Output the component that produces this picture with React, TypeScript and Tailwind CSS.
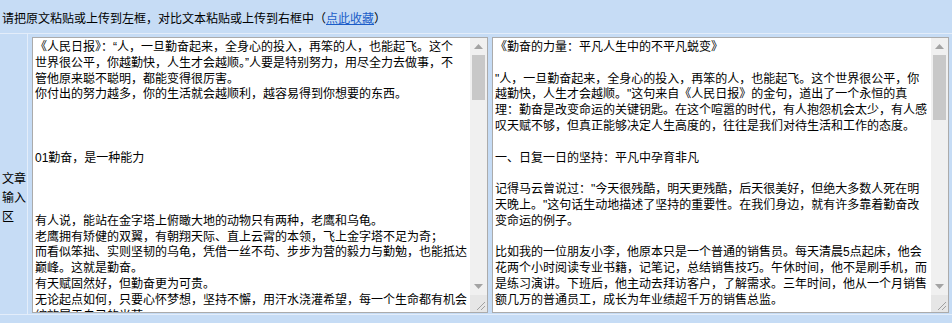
import { useState } from "react";

const LEFT_TEXT = `《人民日报》：“人，一旦勤奋起来，全身心的投入，再笨的人，也能起飞。这个
世界很公平，你越勤快，人生才会越顺。”人要是特别努力，用尽全力去做事，不
管他原来聪不聪明，都能变得很厉害。
你付出的努力越多，你的生活就会越顺利，越容易得到你想要的东西。



01勤奋，是一种能力



有人说，能站在金字塔上俯瞰大地的动物只有两种，老鹰和乌龟。
老鹰拥有矫健的双翼，有朝翔天际、直上云霄的本领，飞上金字塔不足为奇；
而看似笨拙、实则坚韧的乌龟，凭借一丝不苟、步步为营的毅力与勤勉，也能抵达
巅峰。这就是勤奋。
有天赋固然好，但勤奋更为可贵。
无论起点如何，只要心怀梦想，坚持不懈，用汗水浇灌希望，每一个生命都有机会
绽放属于自己的光芒。



02勤奋，是一种态度



所谓天才，不过是把别人喝咖啡的功夫都用在了工作上。
那些看起来毫不费力的人，背后都付出了常人难以想象的努力。
每天进步一点点，日积月累，终会迎来质的飞跃。



03勤奋，是一种习惯



习惯一旦养成，便会成为生命的一部分。
早起读书，按时锻炼，认真对待每一件小事，
这些看似平凡的坚持，终将让你成为更好的自己。



04勤奋，是一种修行



人生没有白走的路，每一步都算数。
与其羡慕别人的成功，不如从现在开始，
脚踏实地，一步一个脚印，走好属于自己的路。
愿你我都能以勤奋为桨，驶向更辽阔的远方。
`;

const RIGHT_TEXT = `《勤奋的力量：平凡人生中的不平凡蜕变》

"人，一旦勤奋起来，全身心的投入，再笨的人，也能起飞。这个世界很公平，你
越勤快，人生才会越顺。"这句来自《人民日报》的金句，道出了一个永恒的真
理：勤奋是改变命运的关键钥匙。在这个喧嚣的时代，有人抱怨机会太少，有人感
叹天赋不够，但真正能够决定人生高度的，往往是我们对待生活和工作的态度。

一、日复一日的坚持：平凡中孕育非凡

记得马云曾说过："今天很残酷，明天更残酷，后天很美好，但绝大多数人死在明
天晚上。"这句话生动地描述了坚持的重要性。在我们身边，就有许多靠着勤奋改
变命运的例子。

比如我的一位朋友小李，他原本只是一个普通的销售员。每天清晨5点起床，他会
花两个小时阅读专业书籍，记笔记，总结销售技巧。午休时间，他不是刷手机，而
是练习演讲。下班后，他主动去拜访客户，了解需求。三年时间，他从一个月销售
额几万的普通员工，成长为年业绩超千万的销售总监。

二、勤能补拙：天赋之外的另一条路

古人云："勤能补拙是良训，一分辛苦一分才。"天赋固然重要，但它只是起点，
而不是终点。那些看似天资平平的人，凭借日复一日的努力，同样可以走得很远。

三、勤奋的真谛：方向比努力更重要

勤奋不是盲目的忙碌，而是有目标、有方法的持续投入。找准方向，
再全力以赴，才能让每一分汗水都开出花来。

结语

愿我们都能成为勤奋的人，在平凡的日子里，书写不平凡的人生。
`;

function Arrow({ down }: { down?: boolean }) {
  return (
    <div className="flex h-[17px] items-center justify-center">
      <svg width="9" height="5" viewBox="0 0 9 5">
        {down ? (
          <polygon points="0,0 9,0 4.5,5" fill="#a3a3a3" />
        ) : (
          <polygon points="0,5 9,5 4.5,0" fill="#a3a3a3" />
        )}
      </svg>
    </div>
  );
}

function ScrollBar({ thumb }: { thumb: number }) {
  return (
    <div className="flex w-[17px] shrink-0 flex-col bg-[#f0f0f0]">
      <Arrow />
      <div className="flex-1 px-[2px]">
        <div className="w-full bg-[#c8c8c8]" style={{ height: thumb }} />
      </div>
      <Arrow down />
      <div className="flex h-[17px] items-end justify-end bg-[#e6e6e6] pb-[2px] pr-[2px]">
        <svg width="10" height="10" viewBox="0 0 10 10">
          <line x1="10" y1="2" x2="2" y2="10" stroke="#a0a0a0" strokeWidth="1" />
          <line x1="10" y1="6" x2="6" y2="10" stroke="#a0a0a0" strokeWidth="1" />
        </svg>
      </div>
    </div>
  );
}

function TextBox({ text, width, thumb }: { text: string; width: string; thumb: number }) {
  const [value, setValue] = useState(text);
  return (
    <div className={`flex h-[276px] border border-[#ababab] bg-white ${width}`}>
      <textarea
        value={value}
        onChange={(e) => setValue(e.target.value)}
        className="h-full min-w-0 flex-1 resize-none overflow-hidden bg-white p-[2px] text-[12px] leading-[15.8px] text-black outline-none"
        spellCheck={false}
      />
      <ScrollBar thumb={thumb} />
    </div>
  );
}

export default function App() {
  return (
    <div className="h-[323px] w-[952px] overflow-hidden bg-[#c6dcf5] text-[12px] text-black [font-family:'Liberation_Sans','Noto_Sans_CJK_SC',sans-serif]">
      <div className="h-[34px] border-b border-[#e3edfa] pl-[2px] pt-[11px] leading-[16px]">
        请把原文粘贴或上传到左框，对比文本粘贴或上传到右框中（
        <a href="#" className="text-[#1a5cc8] underline">
          点此收藏
        </a>
        ）
      </div>
      <div className="flex border-b border-[#e3edfa]">
        <div className="w-[28px] shrink-0 border-r border-[#e3edfa] pl-[2px] pt-[136px] leading-[19px]">
          文章输入区
        </div>
        <div className="flex gap-[4px] pb-[1px] pl-[4px] pt-[3px]">
          <TextBox text={LEFT_TEXT} width="w-[456px]" thumb={45} />
          <TextBox text={RIGHT_TEXT} width="w-[457px]" thumb={65} />
        </div>
      </div>
    </div>
  );
}
